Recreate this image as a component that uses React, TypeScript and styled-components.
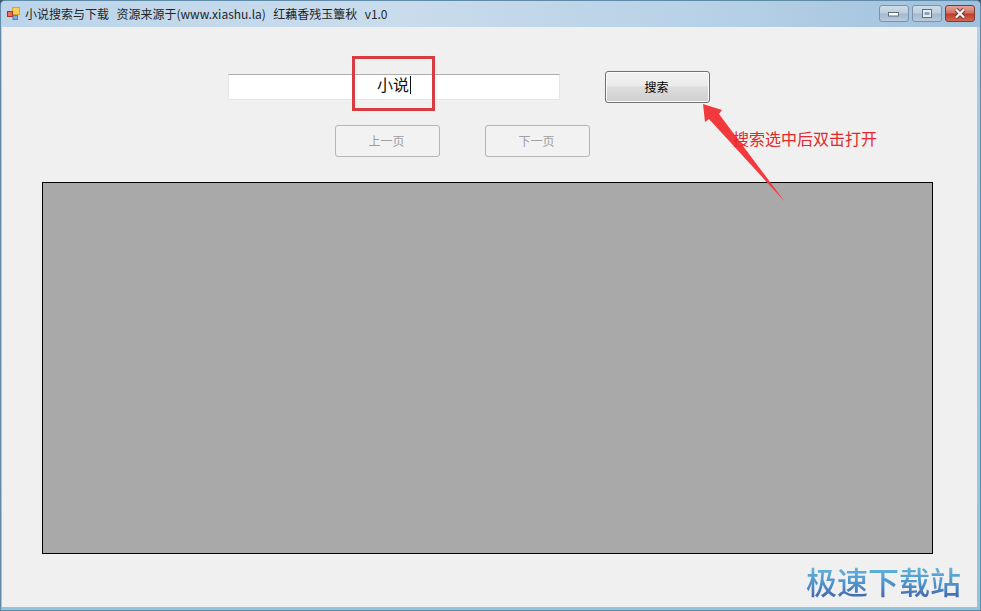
import React from "react";
import styled, { createGlobalStyle } from "styled-components";

const Global = createGlobalStyle`
  html, body { margin: 0; padding: 0; background: #3d5a75; overflow: hidden; }
  * { box-sizing: border-box; }
`;
const cjk = `"Noto Sans CJK SC", "Liberation Sans", sans-serif`;

const Window = styled.div`
  position: relative;
  width: 981px;
  height: 611px;
  display: flex;
  flex-direction: column;
  padding: 0 3px 3px 1px;
  border: 1px solid #5f8aa8;
  border-radius: 5px 5px 0 0;
  background: linear-gradient(180deg, #c3d9ec 0, #a9cbe6 60px, #8fc4e2 100%);
  font-family: ${cjk};
`;
const TitleBar = styled.div`
  height: 26px;
  display: flex;
  align-items: flex-start;
  background: linear-gradient(90deg, #bcd5ea 0, #c9dcec 40%, #b5d0e6 75%, #9fc0dc 100%);
  margin: 0 -3px 0 -1px;
  padding: 4px 5px 0 6px;
  border-radius: 4px 4px 0 0;
`;
const AppIcon = styled.svg`
  width: 13px;
  height: 13px;
  margin-top: 2px;
  flex: none;
`;
const Title = styled.div`
  margin: 1px 0 0 5px;
  font-size: 12px;
  line-height: 16px;
  color: #20262c;
  white-space: pre;
  word-spacing: 1px;
  flex: 1;
`;
const Caption = styled.div`
  display: flex;
  gap: 3px;
`;
const CaptionButton = styled.div<{ $close?: boolean }>`
  width: 30px;
  height: 17px;
  border: 1px solid ${(p) => (p.$close ? "#7d3a34" : "#7a93ab")};
  border-radius: 3px;
  display: flex;
  align-items: center;
  justify-content: center;
  background: ${(p) =>
    p.$close
      ? "linear-gradient(180deg, #e3a49a 0, #d4705f 48%, #c0392a 52%, #d06a50 100%)"
      : "linear-gradient(180deg, #cfdde9 0, #bccddc 48%, #a4b9cd 52%, #b9cbdc 100%)"};
`;
const Client = styled.main`
  flex: 1;
  background: #f0f0f0;
  display: flex;
  flex-direction: column;
`;
const SearchRow = styled.div`
  display: flex;
  align-items: center;
  margin: 44px 0 0 226px;
  height: 32px;
`;
const SearchField = styled.div`
  width: 332px;
  height: 26px;
  background: #fff;
  border: 1px solid #e6e6e6;
  border-top-color: #adadad;
  padding-left: 148px;
  font-size: 16px;
  line-height: 18px;
  color: #111;
`;
const Caret = styled.span`
  display: inline-block;
  width: 1px;
  height: 18px;
  background: #111;
  vertical-align: -3px;
  margin-left: 1px;
`;
const Button = styled.div`
  width: 105px;
  height: 32px;
  display: flex;
  align-items: center;
  justify-content: center;
  font-size: 12px;
  border-radius: 3px;
`;
const SearchButton = styled(Button)`
  margin-left: 45px;
  padding: 0 2px 2px 0;
  border: 1px solid #707070;
  color: #000;
  background: linear-gradient(180deg, #f2f2f2 0, #ebebeb 45%, #dddddd 50%, #cfcfcf 100%);
  box-shadow: inset 0 0 0 1px #fbfbfb;
`;
const PagerRow = styled.div`
  display: flex;
  gap: 45px;
  margin: 22px 0 0 333px;
`;
const PagerButton = styled(Button)`
  padding: 0 2px 1px 0;
  border: 1px solid #b5b5b5;
  color: #a0a0a0;
  background: #f2f2f2;
`;
const ListPanel = styled.div`
  width: 891px;
  height: 372px;
  margin: 25px 0 0 40px;
  background: #a9a9a9;
  border: 1px solid #000;
`;
const Highlight = styled.div`
  position: absolute;
  left: 351px;
  top: 55px;
  width: 83px;
  height: 55px;
  border: 3px solid #d83c40;
`;
const Arrow = styled.svg`
  position: absolute;
  left: 694px;
  top: 94px;
  width: 100px;
  height: 115px;
`;
const Note = styled.div`
  position: absolute;
  left: 732px;
  top: 125px;
  font-size: 16px;
  line-height: 24px;
  color: #e2282c;
  white-space: nowrap;
`;
const Watermark = styled.div`
  position: absolute;
  left: 805px;
  top: 559px;
  font-size: 31px;
  line-height: 42px;
  font-weight: 500;
  white-space: nowrap;
  color: transparent;
  background: linear-gradient(180deg, #62b6de 15%, #4d8fc8 60%, #4268b0 88%);
  -webkit-background-clip: text;
  background-clip: text;
`;

export default function App() {
  return (
    <Window>
      <Global />
      <TitleBar>
        <AppIcon viewBox="0 0 13 13">
          <rect x="5.5" y="0.5" width="7" height="7" fill="#f7cf55" stroke="#d9a62c" />
          <rect x="0.5" y="4.5" width="5" height="5" fill="#e8705a" stroke="#a8321f" />
          <rect x="6" y="8.5" width="4.5" height="4" fill="#7fa8dc" stroke="#5580b8" />
        </AppIcon>
        <Title>小说搜索与下载  资源来源于(www.xiashu.la)  红藕香残玉簟秋  v1.0</Title>
        <Caption>
          <CaptionButton>
            <svg width="12" height="6" viewBox="0 0 12 6">
              <rect x="0.5" y="1.5" width="10" height="3.5" fill="#fff" stroke="#5a6e84" />
            </svg>
          </CaptionButton>
          <CaptionButton>
            <svg width="10" height="9" viewBox="0 0 10 9">
              <rect x="0.5" y="0.5" width="9" height="8" fill="#e6edf3" stroke="#5a6e84" />
              <rect x="2.5" y="3" width="5" height="3" fill="#8ba2b8" />
            </svg>
          </CaptionButton>
          <CaptionButton $close>
            <svg width="14" height="11" viewBox="0 0 14 11">
              <path d="M3 1.5 L11 9.5 M11 1.5 L3 9.5" stroke="#6a302c" strokeWidth="4" />
              <path d="M3 1.5 L11 9.5 M11 1.5 L3 9.5" stroke="#f4f4f4" strokeWidth="2.4" />
            </svg>
          </CaptionButton>
        </Caption>
      </TitleBar>
      <Client>
        <SearchRow>
          <SearchField>
            小说<Caret />
          </SearchField>
          <SearchButton>搜索</SearchButton>
        </SearchRow>
        <PagerRow>
          <PagerButton>上一页</PagerButton>
          <PagerButton>下一页</PagerButton>
        </PagerRow>
        <ListPanel />
      </Client>
      <Highlight />
      <Arrow viewBox="0 0 100 115">
        <path d="M90 107 L24 19 L27 15 L8 9 L10 27 L14 24 Z" fill="#f23a3c" />
      </Arrow>
      <Note>搜索选中后双击打开</Note>
      <Watermark>极速下载站</Watermark>
    </Window>
  );
}
